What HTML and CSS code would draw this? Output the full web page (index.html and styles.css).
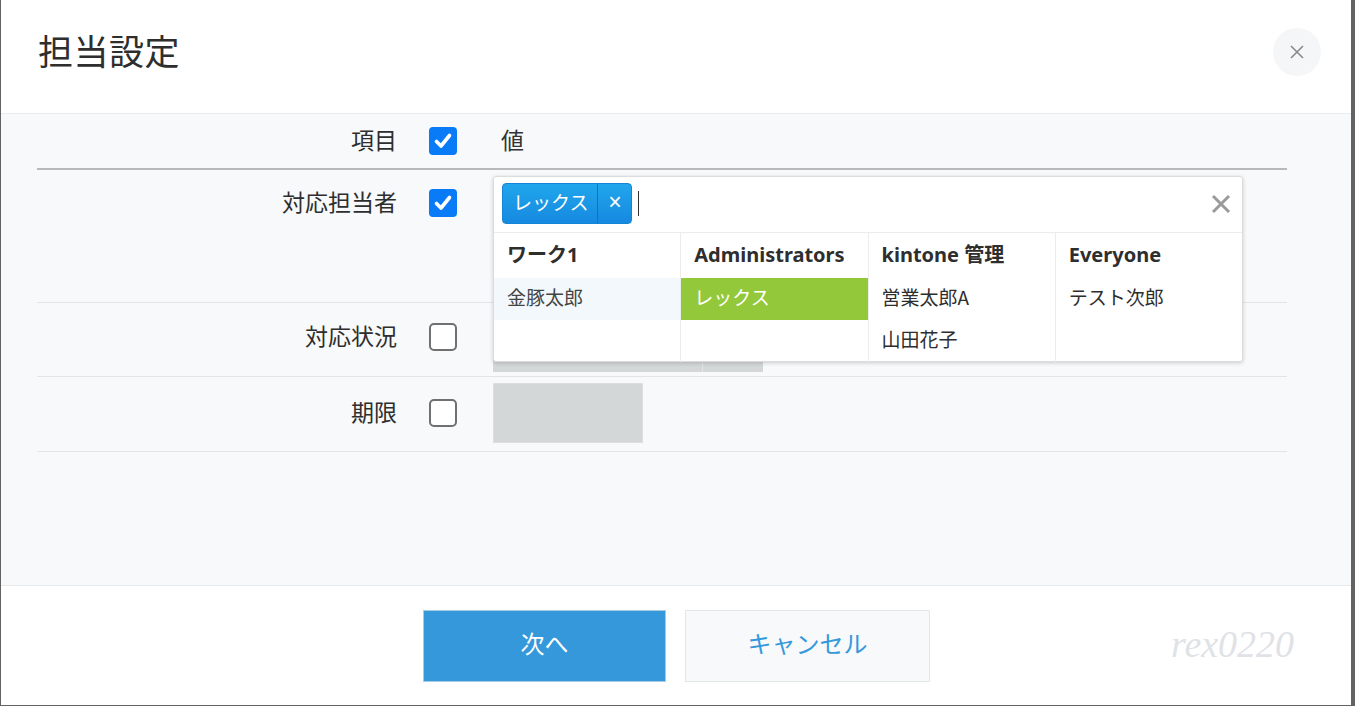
FILE: index.html
```html
<!DOCTYPE html>
<html lang="ja">
<head>
<meta charset="utf-8">
<title>担当設定</title>
<link rel="stylesheet" href="styles.css">
</head>
<body>
<div class="modal">
  <header class="modal-header">
    <h1 class="modal-title">担当設定</h1>
    <button class="close-btn" aria-label="close">
      <svg width="16" height="16" viewBox="0 0 16 16"><path d="M2 2 L14 14 M14 2 L2 14" stroke="#8a8a8a" stroke-width="1.6" fill="none"/></svg>
    </button>
  </header>
  <main class="modal-body">
    <div class="row row-head">
      <div class="cell-label">項目</div>
      <div class="cell-check"><span class="cb checked"><svg viewBox="0 0 28 28" width="28" height="28"><path d="M7.5 14.5 L12 19 L20.5 8.5" stroke="#fff" stroke-width="3.6" fill="none" stroke-linecap="round" stroke-linejoin="round"/></svg></span></div>
      <div class="cell-value head-value">値</div>
    </div>
    <div class="row row-user">
      <div class="cell-label">対応担当者</div>
      <div class="cell-check"><span class="cb checked"><svg viewBox="0 0 28 28" width="28" height="28"><path d="M7.5 14.5 L12 19 L20.5 8.5" stroke="#fff" stroke-width="3.6" fill="none" stroke-linecap="round" stroke-linejoin="round"/></svg></span></div>
      <div class="cell-value">
        <div class="picker">
          <div class="picker-input">
            <span class="tag"><span class="tag-text">レックス</span><span class="tag-x">×</span></span>
            <span class="caret"></span>
            <span class="clear">
              <svg width="20" height="20" viewBox="0 0 20 20"><path d="M2 2 L18 18 M18 2 L2 18" stroke="#9a9a9a" stroke-width="3" fill="none"/></svg>
            </span>
          </div>
          <div class="picker-cols">
            <div class="col">
              <div class="col-head">ワーク1</div>
              <div class="item hover">金豚太郎</div>
            </div>
            <div class="col">
              <div class="col-head">Administrators</div>
              <div class="item selected">レックス</div>
            </div>
            <div class="col">
              <div class="col-head">kintone 管理</div>
              <div class="item">営業太郎A</div>
              <div class="item">山田花子</div>
            </div>
            <div class="col">
              <div class="col-head">Everyone</div>
              <div class="item">テスト次郎</div>
            </div>
          </div>
        </div>
      </div>
    </div>
    <div class="row row-status">
      <div class="cell-label">対応状況</div>
      <div class="cell-check"><span class="cb"></span></div>
      <div class="cell-value"><div class="select-box"><span class="sel-main"></span><span class="sel-arrow"></span></div></div>
    </div>
    <div class="row row-date">
      <div class="cell-label">期限</div>
      <div class="cell-check"><span class="cb"></span></div>
      <div class="cell-value"><div class="date-box"></div></div>
    </div>
  </main>
  <footer class="modal-footer">
    <button class="btn btn-primary">次へ</button>
    <button class="btn btn-cancel">キャンセル</button>
    <span class="watermark">rex0220</span>
  </footer>
</div>
</body>
</html>
```

FILE: styles.css
```css
* { box-sizing: border-box; }
html, body { margin: 0; padding: 0; }
body {
  width: 1355px;
  height: 706px;
  background: #626262;
  overflow: hidden;
  font-family: "Noto Sans", "Noto Sans CJK JP", sans-serif;
  color: #333;
}
.modal {
  margin-left: 1px;
  width: 1350px;
  height: 705px;
  background: #fff;
  display: flex;
  flex-direction: column;
}
.modal-header {
  height: 114px;
  flex: none;
  border-bottom: 1px solid #e9ecef;
  display: flex;
  align-items: center;
  justify-content: space-between;
  padding: 0 30px 10px 37px;
}
.modal-title {
  margin: 0 0 4px 0;
  font-size: 35px;
  font-weight: 400;
  color: #2e2e2e;
  letter-spacing: 0.5px;
  font-family: "Noto Sans CJK JP", sans-serif;
}
.close-btn {
  width: 48px;
  height: 48px;
  border-radius: 50%;
  border: none;
  background: #f5f6f8;
  display: flex;
  align-items: center;
  justify-content: center;
  padding: 0;
}
.modal-body {
  flex: 1;
  background: #f7f9fa;
  padding: 0 64px 0 36px;
}
.row {
  display: flex;
  border-bottom: 1px solid #e2e4e6;
}
.cell-label {
  width: 360px;
  text-align: right;
  font-size: 23px;
  font-family: "Noto Sans CJK JP", sans-serif;
  line-height: 28px;
  color: #2e2e2e;
  padding-bottom: 4px;
}
.cell-check {
  width: 96px;
  padding-left: 32px;
  display: flex;
}
.cell-value {
  flex: 1;
  position: relative;
}
.cb {
  width: 28px;
  height: 28px;
  border-radius: 5px;
  border: 2px solid #707070;
  background: #fff;
  display: block;
}
.cb.checked {
  border: none;
  background: #0a7bf6;
  border-radius: 4px;
}
.cb svg { display: block; }
.row-head {
  height: 56px;
  align-items: center;
  border-bottom: 2px solid #b9b9b9;
  padding-bottom: 1px;
}
.head-value {
  font-size: 23px;
  font-family: "Noto Sans CJK JP", sans-serif;
  padding-left: 8px;
  line-height: 28px;
  padding-bottom: 4px;
}
.row-user {
  height: 133px;
  padding-top: 19px;
}
.row-user .cell-label { margin-top: -2px; }
.row-status {
  height: 74px;
  align-items: center;
}
.row-status .cell-label, .row-status .cell-check { margin-top: -6px; }
.row-date {
  height: 75px;
  align-items: center;
}
.row-date .cell-label, .row-date .cell-check { margin-top: -3px; }
.select-box {
  display: flex;
  width: 270px;
  height: 60px;
  margin-top: 4px;
}
.sel-main { width: 209px; background: #d4d7d8; }
.sel-arrow { flex: 1; background: #d4d7d8; border-left: 1px solid #e2e4e5; }
.date-box {
  width: 150px;
  height: 60px;
  background: #d4d7d8;
  border: 1px solid #dcdfe0;
  margin-top: -2px;
}
.picker {
  position: absolute;
  left: 0;
  top: -13px;
  width: 750px;
  height: 186px;
  background: #fff;
  border: 1px solid #dcdcdc;
  border-radius: 3px;
  box-shadow: 0 1px 4px rgba(0,0,0,0.18);
  display: flex;
  flex-direction: column;
  z-index: 2;
}
.picker-input {
  height: 56px;
  flex: none;
  border-bottom: 1px solid #ececec;
  display: flex;
  align-items: center;
  padding: 0 0 2px 8px;
}
.tag {
  display: flex;
  height: 41px;
  border-radius: 4px;
  background: linear-gradient(#20a6ec, #1689e0);
  border: 1px solid #1584d4;
  color: #fff;
  align-items: stretch;
  font-family: "Noto Sans CJK JP", sans-serif;
}
.tag-text {
  font-size: 19px;
  line-height: 36px;
  padding: 0 9px 0 10px;
}
.tag-x {
  width: 34px;
  border-left: 1px solid #1472b5;
  text-align: center;
  font-size: 23px;
  line-height: 37px;
  font-family: "Liberation Sans", sans-serif;
}
.caret {
  width: 1px;
  height: 25px;
  background: #333;
  margin-left: 6px;
}
.clear {
  margin-left: auto;
  margin-right: 11px;
  display: flex;
}
.picker-cols {
  flex: 1;
  display: flex;
}
.col {
  flex: 1;
  border-left: 1px solid #ececec;
}
.col:first-child { border-left: none; }
.col-head {
  height: 45px;
  padding-left: 13px;
  font-weight: 700;
  font-size: 20px;
  line-height: 43px;
  color: #2e2e2e;
}
.item {
  height: 42px;
  line-height: 38px;
  padding-left: 13px;
  font-size: 19px;
  font-family: "Noto Sans CJK JP", sans-serif;
  color: #2e2e2e;
}
.item.hover { background: #f2f8fb; color: #444; }
.item.selected { background: #93c83a; color: #fff; }
.modal-footer {
  height: 120px;
  flex: none;
  border-top: 1px solid #e6e9eb;
  display: flex;
  align-items: center;
  justify-content: center;
  gap: 19px;
  position: relative;
  padding-left: 1px;
}
.btn {
  height: 72px;
  font-size: 24px;
  font-family: "Noto Sans CJK JP", sans-serif;
  padding: 0 0 6px 0;
}
.btn-primary {
  width: 243px;
  background: #3498db;
  border: 1px solid #a9cce6;
  color: #fff;
}
.btn-cancel {
  width: 245px;
  background: #f7f9fa;
  border: 1px solid #e3e7e8;
  color: #3498db;
}
.watermark {
  position: absolute;
  left: 1170px;
  top: 36px;
  font-family: "Liberation Serif", serif;
  font-style: italic;
  font-size: 38px;
  color: #dfe2e6;
}
```
